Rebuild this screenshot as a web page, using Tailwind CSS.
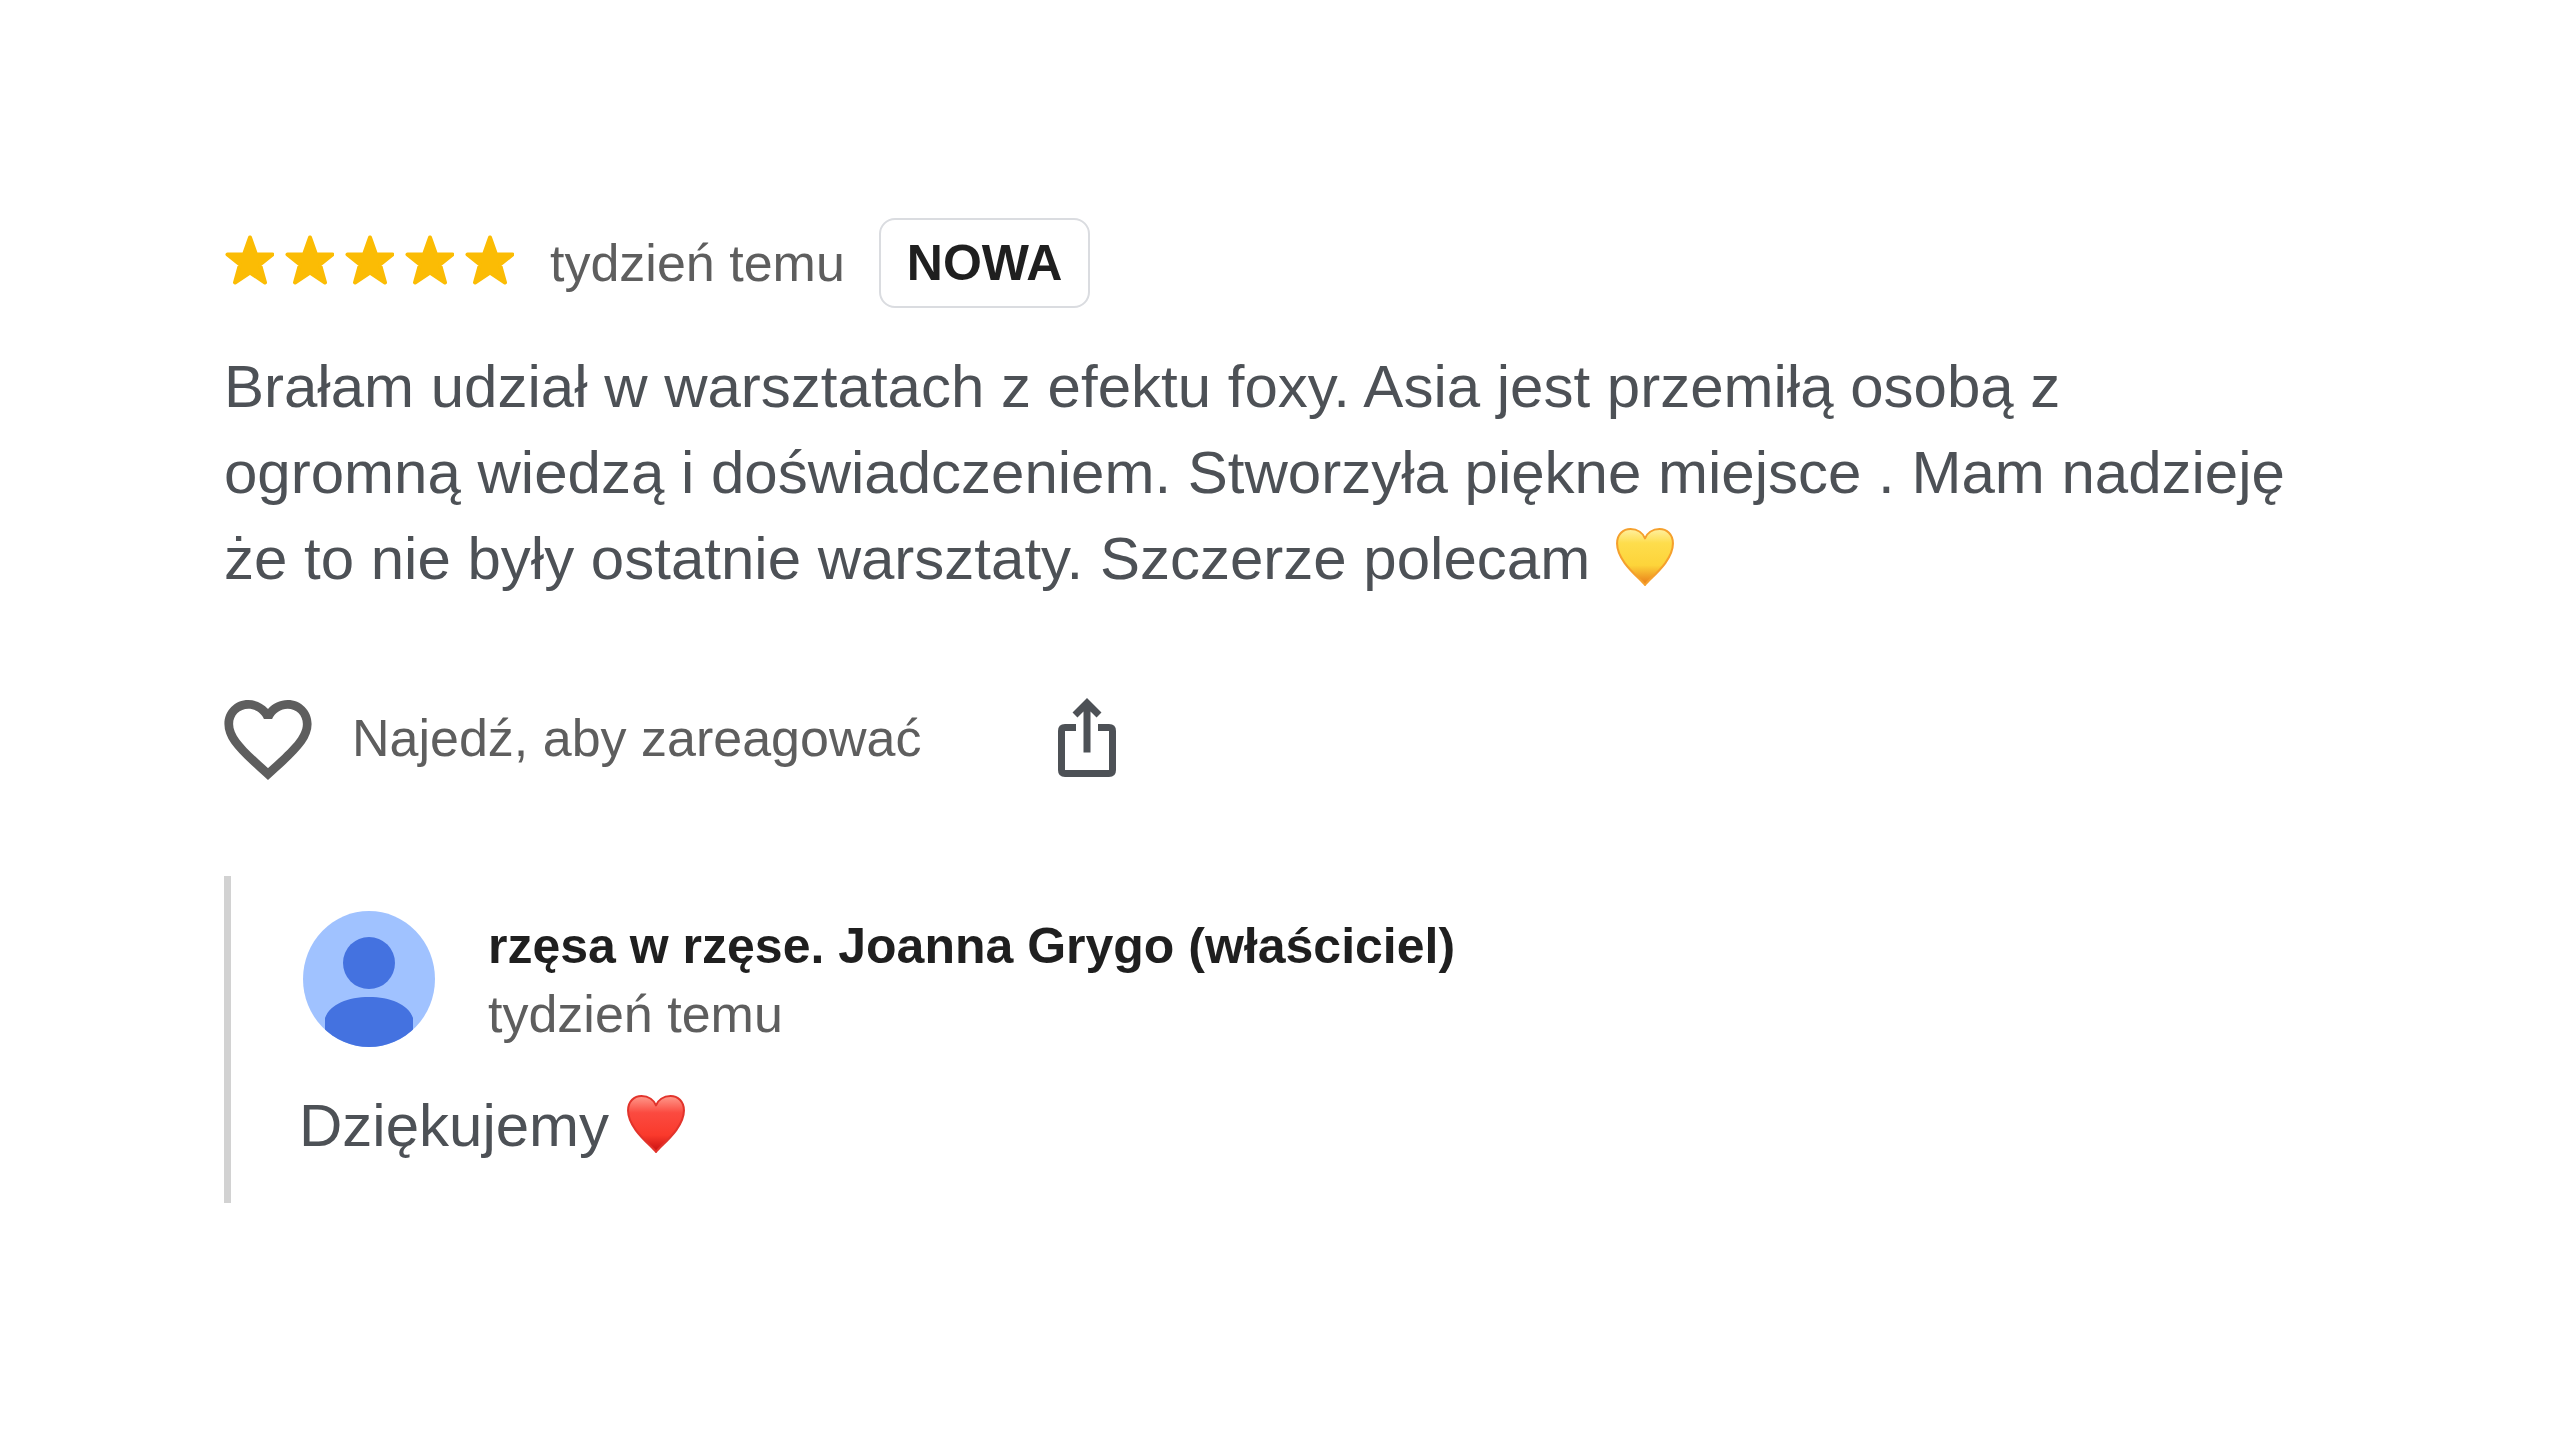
<!DOCTYPE html>
<html lang="pl">
<head>
  <meta charset="UTF-8" />
  <meta name="viewport" content="width=device-width, initial-scale=1.0" />
  <title>Opinia</title>
  <script src="https://cdn.jsdelivr.net/npm/@tailwindcss/browser@4"></script>
</head>
<body class="bg-white min-h-screen font-['Liberation_Sans',Arial,sans-serif] text-[#5e5e5e]">
  <!-- shared shapes -->
  <svg class="hidden" aria-hidden="true">
    <symbol id="star" viewBox="0 0 50 50">
      <path d="M26 2.500 L32 19.500 H48.500 L36 29.500 L41 47.500 L26 37.500 L11 47.500 L16 29.500 L3.500 19.500 H20 Z" fill="#fbbc04" stroke="#fbbc04" stroke-width="4" stroke-linejoin="round" />
    </symbol>
  </svg>

  <main class="px-56 pt-[218px] pb-[236px]">
    <article>
      <header class="flex items-center h-[90px]">
        <div class="flex gap-[10px] pb-1.5" role="img" aria-label="5 gwiazdek">
          <svg class="size-[50px]"><use href="#star" /></svg>
          <svg class="size-[50px]"><use href="#star" /></svg>
          <svg class="size-[50px]"><use href="#star" /></svg>
          <svg class="size-[50px]"><use href="#star" /></svg>
          <svg class="size-[50px]"><use href="#star" /></svg>
        </div>
        <span class="ml-9 text-[52px] leading-[70px]">tydzień temu</span>
        <span class="ml-[34px] px-[26px] h-[90px] flex items-center rounded-2xl border-2 border-[#dadce0] text-[50px] font-bold text-[#1f1f1f]">NOWA</span>
      </header>

      <p class="mt-9 text-[60px] leading-[86px] text-[#4d5156]">
        Brałam udział w warsztatach z efektu foxy. Asia jest przemiłą osobą z<br />
        ogromną wiedzą i doświadczeniem. Stworzyła piękne miejsce . Mam nadzieję<br />
        że to nie były ostatnie warsztaty. Szczerze polecam
        <svg class="inline-block align-baseline ml-2 w-[60px] h-[60px] translate-y-2" viewBox="0 0 58 58" role="img" aria-label="żółte serce">
          <defs>
            <linearGradient id="yellowFill" x1="0" y1="0" x2="0" y2="1">
              <stop offset="0" stop-color="#fff0a0" />
              <stop offset="0.25" stop-color="#fedd4c" />
              <stop offset="0.65" stop-color="#fdd43a" />
              <stop offset="1" stop-color="#e97a17" />
            </linearGradient>
          </defs>
          <path d="M29 56 C25 50 2 34 2 16 C2 7 8 2 15 2 C22 2 27 6 29 11 C31 6 36 2 43 2 C50 2 56 7 56 16 C56 34 33 50 29 56 Z" fill="url(#yellowFill)" stroke="#f5a02c" stroke-width="2" stroke-linejoin="round" />
        </svg>
      </p>

      <div class="mt-[94px] flex items-center h-[84px]">
        <button type="button" class="flex items-center h-full text-[52px] leading-[70px]">
          <svg class="self-end w-[88px] h-[80px]" viewBox="2 3 20 18.35" fill="#5e5e5e" aria-hidden="true">
            <path d="M16.500 3c-1.740 0-3.410.810-4.500 2.090C10.910 3.810 9.240 3 7.500 3 4.420 3 2 5.420 2 8.500c0 3.780 3.400 6.860 8.550 11.540L12 21.350l1.450-1.320C18.600 15.360 22 12.280 22 8.500 22 5.420 19.580 3 16.500 3zm-4.400 15.550l-.100.100-.100-.100C7.140 14.240 4 11.390 4 8.500 4 6.500 5.500 5 7.500 5c1.540 0 3.040.990 3.570 2.360h1.870C13.460 5.990 14.960 5 16.500 5c2 0 3.500 1.500 3.500 3.500 0 2.890-3.140 5.740-7.900 10.050z" />
          </svg>
          <span class="ml-10">Najedź, aby zareagować</span>
        </button>
        <button type="button" class="ml-[137px]" aria-label="Udostępnij">
          <svg class="w-[58px] h-20" viewBox="0 0 58 80" fill="none" stroke="#4d5156" stroke-width="7" aria-hidden="true">
            <path d="M18 29.500 H7 Q3.500 29.500 3.500 33 V72 Q3.500 75.500 7 75.500 H51 Q54.500 75.500 54.500 72 V33 Q54.500 29.500 51 29.500 H40" />
            <path d="M29 54.500 V6 M17 17 L29 5 L41 17" />
          </svg>
        </button>
      </div>

      <section class="mt-24 border-l-[7px] border-[#d2d2d2] pl-[68px] pt-[35px] pb-[34px]">
        <div class="flex pl-1">
          <svg class="w-[132px] h-[136px]" viewBox="0 0 132 136" aria-hidden="true">
            <clipPath id="avatarClip"><ellipse cx="66" cy="68" rx="66" ry="68" /></clipPath>
            <g clip-path="url(#avatarClip)">
              <rect width="132" height="136" fill="#a0c2ff" />
              <circle cx="66" cy="52" r="26" fill="#4472e0" />
              <path d="M22 136 V107 C27 93 45 86 66 86 C87 86 105 93 110 107 V136 Z" fill="#4472e0" />
            </g>
          </svg>
          <div class="ml-[53px]">
            <h3 class="text-[50px] leading-[70px] font-bold text-[#1f1f1f]">rzęsa w rzęse. Joanna Grygo (właściciel)</h3>
            <div class="text-[52px] leading-[66px]">tydzień temu</div>
          </div>
        </div>
        <p class="mt-9 text-[60px] leading-[86px] text-[#4d5156]">
          Dziękujemy
          <svg class="inline-block align-baseline w-[60px] h-[60px] translate-y-2" viewBox="0 0 58 58" role="img" aria-label="czerwone serce">
            <defs>
              <linearGradient id="redFill" x1="0" y1="0" x2="0" y2="1">
                <stop offset="0" stop-color="#ff9a8c" />
                <stop offset="0.3" stop-color="#fb4a40" />
                <stop offset="0.7" stop-color="#fa3a2c" />
                <stop offset="1" stop-color="#c80f10" />
              </linearGradient>
            </defs>
            <path d="M29 56 C25 50 2 34 2 16 C2 7 8 2 15 2 C22 2 27 6 29 11 C31 6 36 2 43 2 C50 2 56 7 56 16 C56 34 33 50 29 56 Z" fill="url(#redFill)" stroke="#e2332b" stroke-width="2" stroke-linejoin="round" />
          </svg>
        </p>
      </section>
    </article>
  </main>
</body>
</html>
